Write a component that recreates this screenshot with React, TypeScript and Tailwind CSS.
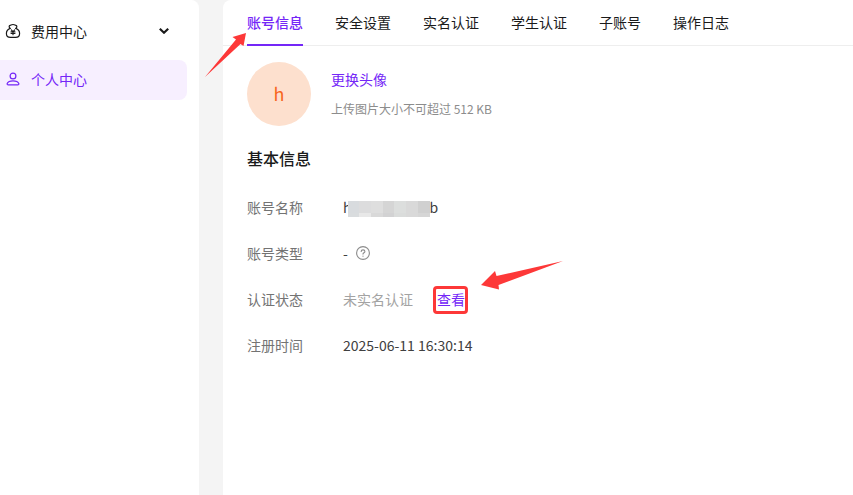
import type { ReactNode } from "react";
import { clsx } from "clsx";

const tabs = ["账号信息", "安全设置", "实名认证", "学生认证", "子账号", "操作日志"];

const mosaic = [
  ["bg-[#d8dbde]", "bg-[#d9dcde]"],
  ["bg-[#dcdcdd]", "bg-[#e8e8e8]"],
  ["bg-[#dedede]", "bg-[#d9d9d9]"],
  ["bg-[#d5d5d5]", "bg-[#d2d2d3]"],
  ["bg-[#dcdedd]", "bg-[#dadcdb]"],
  ["bg-[#d9d9d9]", "bg-[#d9d9d9]"],
  ["bg-[#d0d0d0]", "bg-[#d6d6d6]"],
];

function MoneyBagIcon() {
  return (
    <svg viewBox="0 0 16 16" className="size-4 shrink-0" fill="none" stroke="currentColor" strokeWidth="1.2" strokeLinecap="round" strokeLinejoin="round">
      <path d="M5.2 5.400C3.700 4.200 3.900 2.700 5.200 2.400c.8-.1 1-.9 2.800-.9s2 .8 2.800.9c1.300.3 1.500 1.800 0 3" />
      <path d="M5.200 5.400C2.800 6.400 1.400 8.300 1.400 10.500c0 2.600 1.700 3.900 4 3.900h5.200c2.300 0 4-1.300 4-3.900 0-2.200-1.400-4.100-3.800-5.100" />
      <path d="M6.300 6.900 8 8.700l1.700-1.800M8 8.700v3M6 8.900h4M6 10.500h4" strokeWidth="1.100" />
    </svg>
  );
}

function PersonIcon() {
  return (
    <svg viewBox="0 0 16 16" className="size-4 shrink-0" fill="none" stroke="currentColor" strokeWidth="1.2" strokeLinejoin="round">
      <circle cx="8" cy="5" r="2.900" />
      <path d="M3.300 13.900c-1 0-1.400-.6-1.100-1.400.8-1.900 2.900-2.700 5.800-2.700s5 .8 5.800 2.700c.3.8-.1 1.400-1.100 1.400z" />
    </svg>
  );
}

function HelpIcon() {
  return (
    <svg viewBox="0 0 14 14" className="size-3.5" fill="none" stroke="currentColor" strokeWidth="1.1" strokeLinecap="round">
      <circle cx="7" cy="7" r="6.400" />
      <path d="M5.200 5.500c0-2.200 3.700-2.200 3.700 0 0 1.300-1.900 1.300-1.900 2.600" />
      <path d="M7 10v.2" />
    </svg>
  );
}

function Row({ label, children }: { label: string; children: ReactNode }) {
  return (
    <div className="flex items-center h-[46px]">
      <dt className="w-24 shrink-0 text-[#737373]">{label}</dt>
      <dd className="flex items-center text-[#404040]">{children}</dd>
    </div>
  );
}

function Sidebar() {
  return (
    <nav className="w-[199px] shrink-0 bg-white rounded-tr-lg pt-3 pr-3 flex flex-col gap-2">
      <button className="h-10 pl-[5px] pr-[18px] pb-0.5 flex items-center text-[#1a1a1a]">
        <MoneyBagIcon />
        <span className="ml-2.5">费用中心</span>
        <svg viewBox="0 0 10 6" className="ml-auto w-2.5 h-1.5" fill="none" stroke="currentColor" strokeWidth="2.200">
          <path d="M.8.800 5 4.700 9.200.8" />
        </svg>
      </button>
      <a href="#profile" className="h-10 pl-[5px] pb-0.5 flex items-center rounded-r-lg bg-[#f7efff] text-[#7426f7]">
        <PersonIcon />
        <span className="ml-2.5">个人中心</span>
      </a>
    </nav>
  );
}

export default function App() {
  return (
    <div className="min-h-screen flex gap-6 overflow-hidden bg-[#f4f4f4] text-sm font-['Noto_Sans_CJK_SC',sans-serif]">
      <Sidebar />
      <main className="flex-1 min-w-0 bg-white rounded-tl-lg">
        <div className="pl-6 h-[46px] flex gap-8 border-b border-[#eeeeee]">
          {tabs.map((tab, i) => (
            <button
              key={tab}
              className={clsx(
                "relative h-[46px] shrink-0 border-b-2",
                i === 0 ? "border-[#7426f7] text-[#7426f7] font-medium" : "border-transparent text-[#1a1a1a]"
              )}
            >
              {tab}
              {i === 0 && (
                <svg viewBox="0 0 42 46" className="absolute right-full top-8 w-[42px] h-[46px]" fill="#fd3838">
                  <path d="M41 1 38.500 14 35.500 12 0 45 31 7.500 27.500 5z" />
                </svg>
              )}
            </button>
          ))}
        </div>

        <div className="px-6 pt-4">
          <section className="flex items-center gap-5">
            <div className="size-16 pb-0.5 rounded-full bg-[#fde0ce] text-[#f7651d] text-lg flex items-center justify-center">h</div>
            <div className="flex flex-col items-start gap-2 pb-0.5">
              <button className="leading-6 text-[#7426f7]">更换头像</button>
              <p className="text-xs leading-5 text-[#8c8c8c]">上传图片大小不可超过 512 KB</p>
            </div>
          </section>

          <h2 className="mt-5 text-base leading-6 font-medium text-[#1a1a1a]">基本信息</h2>

          <dl className="mt-3.5">
            <Row label="账号名称">
              <span>h</span>
              <span className="relative flex w-[82px] h-4 mt-1 -ml-1">
                {mosaic.map(([top, bottom], i) => (
                  <span key={i} className="flex-1 flex flex-col">
                    <span className={clsx("h-3", top)} />
                    <span className={clsx("h-1", bottom)} />
                  </span>
                ))}
              </span>
              <span>b</span>
            </Row>
            <Row label="账号类型">
              <span>-</span>
              <button aria-label="账号类型" className="ml-2 text-[#8c8c8c]">
                <HelpIcon />
              </button>
            </Row>
            <Row label="认证状态">
              <span className="text-[#a3a3a3]">未实名认证</span>
              <a href="#verify" className="relative ml-6 text-[#7426f7]">
                查看
                <span className="absolute -left-1 -right-[3px] -top-[3px] -bottom-[5px] border-3 border-[#fd3838] rounded-sm" />
                <svg viewBox="0 0 82 30" className="absolute left-11 -top-[29px] w-[82px] h-[30px]" fill="#fd3838">
                  <path d="M0 25 14 11 15.500 16 82 1 17.500 25 18 29.500z" />
                </svg>
              </a>
            </Row>
            <Row label="注册时间">2025-06-11 16:30:14</Row>
          </dl>
        </div>
      </main>
    </div>
  );
}
